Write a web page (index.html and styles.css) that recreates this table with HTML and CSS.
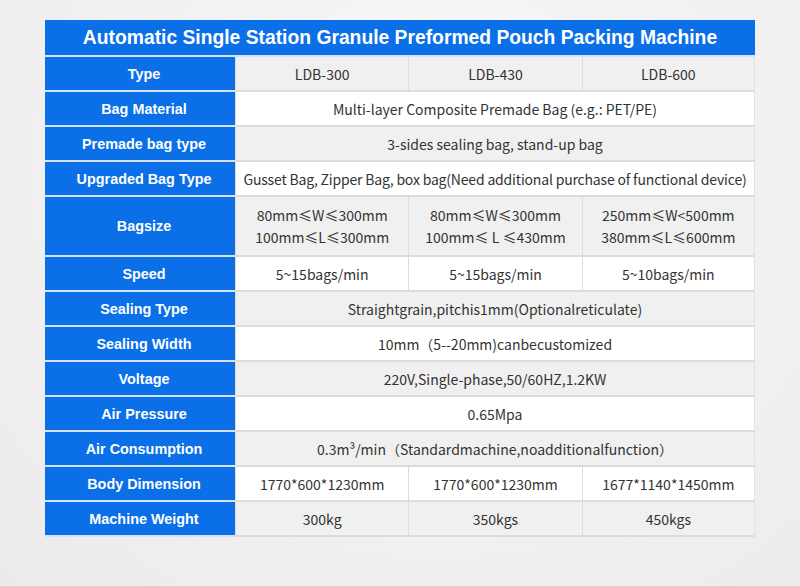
FILE: index.html
```html
<!DOCTYPE html>
<html lang="en">
<head>
<meta charset="utf-8">
<title>Automatic Single Station Granule Preformed Pouch Packing Machine</title>
<link rel="stylesheet" href="styles.css">
</head>
<body>
<div class="page">
  <div class="spec">
    <div class="title">Automatic Single Station Granule Preformed Pouch Packing Machine</div>
    <div class="row alt">
      <div class="label">Type</div>
      <div class="cell">LDB-300</div>
      <div class="cell">LDB-430</div>
      <div class="cell">LDB-600</div>
    </div>
    <div class="row">
      <div class="label">Bag Material</div>
      <div class="cell wide">Multi-layer Composite Premade Bag (e.g.: PET/PE)</div>
    </div>
    <div class="row alt">
      <div class="label">Premade bag type</div>
      <div class="cell wide">3-sides sealing bag, stand-up bag</div>
    </div>
    <div class="row">
      <div class="label">Upgraded Bag Type</div>
      <div class="cell wide tight">Gusset Bag, Zipper Bag, box bag(Need additional purchase of functional device)</div>
    </div>
    <div class="row alt tall">
      <div class="label">Bagsize</div>
      <div class="cell">80mm≤W≤300mm<br>100mm≤L≤300mm</div>
      <div class="cell">80mm≤W≤300mm<br>100mm≤ L ≤430mm</div>
      <div class="cell">250mm≤W&lt;500mm<br>380mm≤L≤600mm</div>
    </div>
    <div class="row">
      <div class="label">Speed</div>
      <div class="cell">5~15bags/min</div>
      <div class="cell">5~15bags/min</div>
      <div class="cell">5~10bags/min</div>
    </div>
    <div class="row alt">
      <div class="label">Sealing Type</div>
      <div class="cell wide">Straightgrain,pitchis1mm(Optionalreticulate)</div>
    </div>
    <div class="row">
      <div class="label">Sealing Width</div>
      <div class="cell wide">10mm（5--20mm)canbecustomized</div>
    </div>
    <div class="row alt">
      <div class="label">Voltage</div>
      <div class="cell wide">220V,Single-phase,50/60HZ,1.2KW</div>
    </div>
    <div class="row">
      <div class="label">Air Pressure</div>
      <div class="cell wide">0.65Mpa</div>
    </div>
    <div class="row alt">
      <div class="label">Air Consumption</div>
      <div class="cell wide">0.3m³/min（Standardmachine,noadditionalfunction）</div>
    </div>
    <div class="row">
      <div class="label">Body Dimension</div>
      <div class="cell">1770*600*1230mm</div>
      <div class="cell">1770*600*1230mm</div>
      <div class="cell">1677*1140*1450mm</div>
    </div>
    <div class="row alt">
      <div class="label">Machine Weight</div>
      <div class="cell">300kg</div>
      <div class="cell">350kgs</div>
      <div class="cell">450kgs</div>
    </div>
  </div>
</div>
</body>
</html>
```
FILE: styles.css
```css
* { box-sizing: border-box; }
html, body { margin: 0; padding: 0; }
body {
  width: 800px;
  height: 586px;
  overflow: hidden;
  background: radial-gradient(ellipse at 55% 30%, #f8f8f8 0%, #f1f1f1 55%, #ebebeb 100%);
}
.page {
  padding: 20px 45px 0 45px;
}
.spec {
  width: 710px;
}
.title {
  height: 37px;
  background: #0b6fe8;
  border-bottom: 2px solid #d3e3f7;
  color: #fff;
  font-family: "Liberation Sans", Arial, sans-serif;
  font-weight: bold;
  font-size: 19.3px;
  display: flex;
  align-items: center;
  justify-content: center;
}
.row {
  display: grid;
  grid-template-columns: 190px 1fr 1fr 1fr;
  height: 35px;
  background: #fff;
}
.row.alt { background: #f0f0f0; }
.row.tall { height: 60px; }
.label {
  background: #0b6fe8;
  color: #fff;
  font-family: "Liberation Sans", Arial, sans-serif;
  font-weight: bold;
  font-size: 14.4px;
  display: flex;
  align-items: center;
  justify-content: center;
  padding-left: 8px;
  border-bottom: 2px solid #d3e3f7;
}
.cell {
  font-family: "Noto Sans CJK SC", "Noto Sans", sans-serif;
  font-size: 14px;
  color: #333;
  display: flex;
  align-items: center;
  justify-content: center;
  text-align: center;
  line-height: 22px;
  border-bottom: 2px solid #dcdcdc;
  border-left: 1px solid #dcdcdc;
}
.cell.wide { grid-column: span 3; }
.cell.tight { letter-spacing: -0.18px; }
.cell:last-child { border-right: 1px solid #e2e2e2; }
```
